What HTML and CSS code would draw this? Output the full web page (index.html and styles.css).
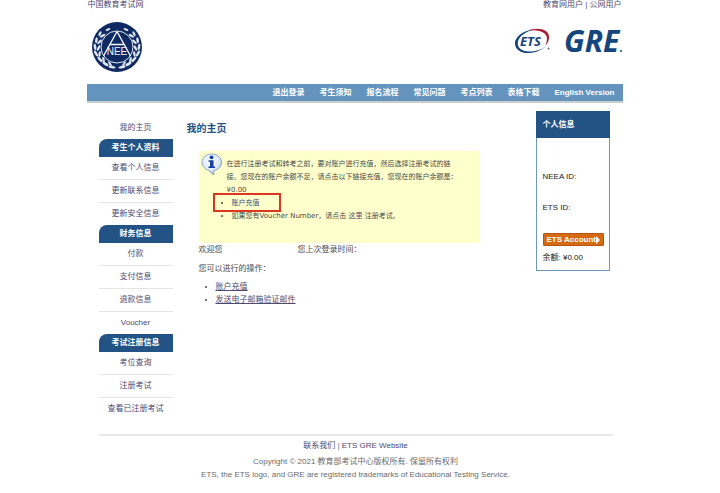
FILE: index.html
```html
<!DOCTYPE html>
<html lang="zh-CN">
<head>
<meta charset="utf-8">
<meta name="viewport" content="width=device-width, initial-scale=1">
<title>我的主页</title>
<link rel="stylesheet" href="styles.css">
</head>
<body>
<div class="page">
  <header>
    <div class="topbar">
      <a href="#">中国教育考试网</a>
      <span><a href="#">教育网用户</a> | <a href="#">公网用户</a></span>
    </div>
    <div class="brand">
      <svg class="neea" viewBox="0 0 50 50" role="img" aria-label="NEEA">
        <defs>
          <g id="leaves" fill="#dfe6f0">
            <ellipse cx="20" cy="45" rx="3.6" ry="1.3" transform="rotate(14 20 45)"/>
            <ellipse cx="18" cy="41.8" rx="3" ry="1.1" transform="rotate(55 18 41.8)"/>
            <ellipse cx="13.5" cy="42" rx="3.4" ry="1.3" transform="rotate(30 13.5 42)"/>
            <ellipse cx="11.5" cy="37.6" rx="3" ry="1.2" transform="rotate(78 11.5 37.6)"/>
            <ellipse cx="8" cy="37.4" rx="3.4" ry="1.3" transform="rotate(48 8 37.4)"/>
            <ellipse cx="7.6" cy="32" rx="3" ry="1.2" transform="rotate(100 7.6 32)"/>
            <ellipse cx="4" cy="31.5" rx="3.3" ry="1.3" transform="rotate(62 4 31.5)"/>
            <ellipse cx="6.6" cy="26" rx="3" ry="1.2" transform="rotate(118 6.6 26)"/>
            <ellipse cx="3" cy="25" rx="3.2" ry="1.3" transform="rotate(82 3 25)"/>
            <ellipse cx="7.6" cy="19.8" rx="3" ry="1.2" transform="rotate(136 7.6 19.8)"/>
            <ellipse cx="4.4" cy="18.2" rx="3.1" ry="1.3" transform="rotate(100 4.4 18.2)"/>
            <ellipse cx="10.6" cy="13.8" rx="3" ry="1.2" transform="rotate(150 10.6 13.8)"/>
            <ellipse cx="8" cy="11.8" rx="2.8" ry="1.2" transform="rotate(115 8 11.8)"/>
            <ellipse cx="16" cy="7.5" rx="2.6" ry="1" transform="rotate(155 16 7.5)"/>
          </g>
        </defs>
        <circle cx="25" cy="25" r="25" fill="#0f2a63"/>
        <use href="#leaves"/>
        <use href="#leaves" transform="translate(50 0) scale(-1 1)"/>
        <circle cx="25" cy="25" r="16" fill="#0f2a63" stroke="#dfe6f0" stroke-width="1"/>
        <path d="M25 9.500 11.500 34M25 9.500 38.500 34M18.500 22.500H31.500" fill="none" stroke="#f4f7fb" stroke-width="1.4"/>
        <text class="neea-text" x="25" y="33" text-anchor="middle">NEE</text>
      </svg>
      <div class="partner">
        <svg class="ets" viewBox="0 0 37 27" role="img" aria-label="ETS">
          <path d="M21 1.500C11 1.500 1 8 1 15.500 1 22 8 25.500 15 25 23 24.500 29 21 31.500 18.500 27 22 20 23.800 14.500 23.500 8 23.200 3.500 20 3.800 15 4.200 8.500 12 3 21 1.500Z" fill="#14457c"/>
          <path d="M14 2.800C20 0 29 0 33 4 36.500 8 35.500 13.500 31 18 33.500 13 34 8.500 30.500 5.500 26.500 2.200 19.500 1.800 14 2.800Z" fill="#a51f35"/>
          <text class="ets-text" x="6" y="18">ETS</text>
          <circle cx="34.500" cy="20.500" r="1" fill="#6e6479"/>
        </svg>
        <svg class="gre" viewBox="0 -8 59 44" role="img" aria-label="GRE">
          <text class="gre-text" x="0" y="25">GRE</text>
          <circle cx="57" cy="24" r="1" fill="#14457c"/>
        </svg>
      </div>
    </div>
    <nav class="nav">
      <a href="#">退出登录</a><a href="#">考生须知</a><a href="#">报名流程</a><a href="#">常见问题</a><a href="#">考点列表</a><a href="#">表格下载</a><a href="#">English Version</a>
    </nav>
  </header>

  <div class="columns">
    <aside class="sidebar">
      <a class="home" href="#">我的主页</a>
      <h2>考生个人资料</h2>
      <ul>
        <li><a href="#">查看个人信息</a></li>
        <li><a href="#">更新联系信息</a></li>
        <li><a href="#">更新安全信息</a></li>
      </ul>
      <h2>财务信息</h2>
      <ul>
        <li><a href="#">付款</a></li>
        <li><a href="#">支付信息</a></li>
        <li><a href="#">退款信息</a></li>
        <li><a href="#">Voucher</a></li>
      </ul>
      <h2>考试注册信息</h2>
      <ul>
        <li><a href="#">考位查询</a></li>
        <li><a href="#">注册考试</a></li>
        <li><a href="#">查看已注册考试</a></li>
      </ul>
    </aside>

    <main class="main">
      <h1>我的主页</h1>
      <div class="content">
        <section class="notice">
          <svg class="info" viewBox="0 0 22 22" aria-hidden="true">
            <defs>
              <radialGradient id="bubble" cx="45%" cy="35%" r="65%">
                <stop offset="0" stop-color="#fff"/>
                <stop offset=".7" stop-color="#dce8f5"/>
                <stop offset="1" stop-color="#8ba9cf"/>
              </radialGradient>
            </defs>
            <path d="M10.500 1C5.500 1 1 4.500 1 9.300 1 13.500 4.500 16.800 8.500 17.600 9.500 19.800 11 21 13 21.500 12.500 20 12.600 19 13 17.500 17.500 16.500 20.500 13.500 20.500 9.300 20.500 4.500 16 1 10.500 1Z" fill="url(#bubble)" stroke="#7893b8" stroke-width=".8"/>
            <circle cx="10.500" cy="4.300" r="1.900" fill="#153fa8"/>
            <path d="M7.500 7.200H12.500V13.500H14V15H7.500V13.500H9V8.700H7.500Z" fill="#153fa8"/>
          </svg>
          <div class="notice-text">
            <p>在进行注册考试和转考之前，要对账户进行充值，然后选择注册考试的链<br>接。您现在的账户余额不足，请点击以下链接充值，您现在的账户余额是：<br>¥0.00</p>
            <ul>
              <li class="marked"><a href="#">账户充值</a></li>
              <li>如果您有Voucher Number，请点击 <a href="#">这里</a> 注册考试。</li>
            </ul>
          </div>
        </section>
        <div class="welcome"><span>欢迎您</span><span>您上次登录时间：</span></div>
        <p class="prompt">您可以进行的操作：</p>
        <ul class="actions">
          <li><a href="#">账户充值</a></li>
          <li><a href="#">发送电子邮箱验证邮件</a></li>
        </ul>
      </div>
    </main>

    <aside class="profile">
      <h2>个人信息</h2>
      <div class="profile-body">
        <p class="id">NEEA ID:</p>
        <p class="id">ETS ID:</p>
        <button class="account" type="button">ETS Account<svg viewBox="0 0 4 8" aria-hidden="true"><path d="M0 0 4 4 0 8Z" fill="#fff"/></svg></button>
        <p>余额: ¥0.00</p>
      </div>
    </aside>
  </div>

  <footer class="footer">
    <p class="links"><a href="#">联系我们</a> | <a href="#">ETS GRE Website</a></p>
    <p>Copyright © 2021 教育部考试中心版权所有. 保留所有权利</p>
    <p>ETS, the ETS logo, and GRE are registered trademarks of Educational Testing Service.</p>
  </footer>
</div>
</body>
</html>
```
FILE: styles.css
```css
*,
*::after {
  box-sizing: border-box;
}

body {
  margin: 0;
  padding-right: 11px;
  background: #fff;
  color: #4a4a4a;
  font: 8px/13px "Liberation Sans", "Noto Sans CJK SC", sans-serif;
}

h1, h2, p, ul {
  margin: 0;
  padding: 0;
}

a {
  color: #4d4a72;
  text-decoration: none;
}

.page {
  max-width: 536px;
  margin: 0 auto;
}

.topbar {
  display: flex;
  justify-content: space-between;
  padding: 0 1px;
  line-height: 10px;
  color: #4d4a72;
}

.brand {
  display: flex;
  justify-content: space-between;
  padding: 12px 0 12px 5px;
}

.neea {
  width: 50px;
  height: 50px;
}

.neea-text {
  font: 10px "Liberation Sans", sans-serif;
  fill: #f4f7fb;
}

.partner {
  display: flex;
  align-items: center;
  gap: 13px;
  height: 38px;
}

.ets {
  width: 37px;
  height: 27px;
}

.ets-text {
  font: italic bold 13px "Open Sans", sans-serif;
  fill: #14457c;
}

.gre {
  width: 59px;
  height: 44px;
}

.gre-text {
  font: italic bold 30px "Open Sans", sans-serif;
  fill: #14457c;
}

.nav {
  display: flex;
  justify-content: flex-end;
  gap: 15px;
  padding-right: 8px;
  background: #6494bd;
  border-bottom: 2px solid #c9ced2;
  line-height: 17px;
  font-weight: bold;
}

.nav a {
  color: #fff;
}

.columns {
  display: grid;
  grid-template-columns: 74px 1fr 74px;
  gap: 14px;
  align-items: start;
  padding: 8px 13px 0 12px;
}

.sidebar {
  padding-top: 6px;
  text-align: center;
}

.sidebar .home {
  display: block;
  line-height: 22px;
}

.sidebar h2 {
  background: #225384;
  border-top-left-radius: 8px;
  color: #fff;
  font-size: 8px;
  line-height: 18px;
}

.sidebar ul {
  list-style: none;
}

.sidebar li {
  border-bottom: 1px solid #e4e4e4;
  line-height: 22px;
}

.sidebar li:last-child {
  border-bottom: 0;
}

.main {
  padding-top: 11px;
}

.main h1 {
  color: #225384;
  font-size: 10px;
  line-height: 14px;
}

.content {
  padding: 15px 0 0 12px;
}

.notice {
  display: flex;
  gap: 4px;
  max-width: 280px;
  min-height: 91px;
  padding: 2px 0 20px 2px;
  background: #ffffcb;
}

.info {
  flex: none;
  width: 22px;
  height: 22px;
}

.notice-text {
  padding-top: 5px;
  font-family: "DejaVu Sans", "Noto Sans CJK SC", sans-serif;
  font-size: 7px;
}

.notice ul {
  padding-left: 5px;
}

.marked {
  position: relative;
}

.marked::after {
  content: "";
  position: absolute;
  top: -4px;
  left: -19px;
  width: 68px;
  height: 19px;
  border: 2px solid #dc3522;
}

.welcome {
  display: flex;
  gap: 75px;
}

.prompt {
  padding: 6px 0 5px;
}

.actions {
  padding-left: 17px;
}

.actions a {
  text-decoration: underline;
}

.profile {
  border: 1px solid #6f98b2;
}

.profile h2 {
  margin: -1px -1px 0;
  padding-left: 7px;
  background: #225384;
  color: #fff;
  font-size: 8px;
  line-height: 27px;
}

.profile-body {
  display: grid;
  justify-items: start;
  padding: 32px 6px 6px;
  color: #222;
}

.id {
  margin-bottom: 18px;
}

.account {
  display: flex;
  align-items: center;
  height: 13px;
  margin: 1px 0 5px;
  padding: 0 3px;
  border: 1px solid #b85413;
  border-radius: 1px;
  background: #d66a10;
  color: #fff;
  font: bold 8px/11px "Liberation Sans", sans-serif;
  white-space: nowrap;
}

.account svg {
  flex: none;
  width: 4px;
  height: 8px;
}

.footer {
  margin: 14px 10px 0 12px;
  padding-top: 3px;
  border-top: 2px solid #e8e8e8;
  color: #6b6b6b;
  text-align: center;
}

.footer .links {
  margin-bottom: 3px;
}
```
